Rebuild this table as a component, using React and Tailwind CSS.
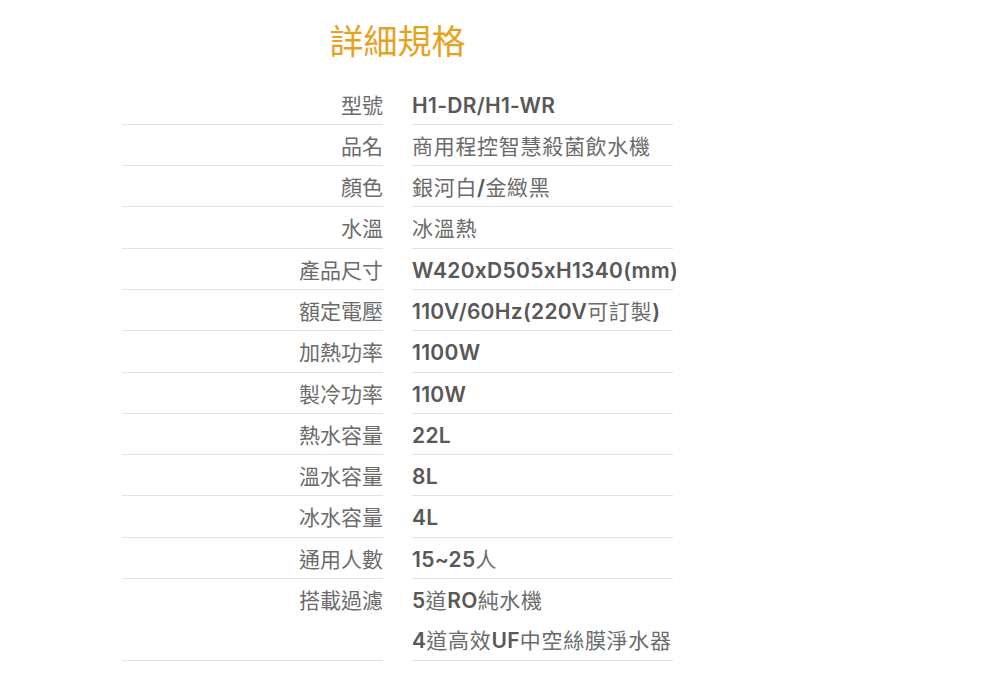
import React from 'react';

const specs = [
    ['型號', ['H1-DR/H1-WR']],
    ['品名', ['商用程控智慧殺菌飲水機']],
    ['顏色', ['銀河白/金緻黑']],
    ['水溫', ['冰溫熱']],
    ['產品尺寸', ['W420xD505xH1340(mm)']],
    ['額定電壓', ['110V/60Hz(220V可訂製)']],
    ['加熱功率', ['1100W']],
    ['製冷功率', ['110W']],
    ['熱水容量', ['22L']],
    ['溫水容量', ['8L']],
    ['冰水容量', ['4L']],
    ['通用人數', ['15~25人']],
    ['搭載過濾', ['5道RO純水機', '4道高效UF中空絲膜淨水器']],
];

// ascii runs are bold latin, the rest stays regular CJK
const Mixed = ({ text }) => {
    const parts = text.split(/([\x00-\x7F]+)/).filter(Boolean);
    return parts.map((p, i) =>
        /^[\x00-\x7F]+$/.test(p) ? (
            <span key={i} className="font-semibold text-[#585858] tracking-[0.3px] font-['Inter','Noto_Sans_CJK_TC',sans-serif]">
                {p}
            </span>
        ) : (
            <span key={i} className="tracking-[0.7px]">{p}</span>
        )
    );
};

const App = () => {
    return (
        <div className="bg-white min-h-[682px] font-['Noto_Sans_CJK_TC',sans-serif]">
            <div className="w-[551px] ml-[122px]">
                <div className="h-[83.5px] flex items-center justify-center">
                    <h1 className="text-[34px] leading-none text-[#e6a11f] -mt-[4px]">詳細規格</h1>
                </div>
                <div className="grid grid-cols-[261px_261px] gap-x-[29px] text-[21px] text-[#6b6b6b]">
                    {specs.map(([label, values]) => (
                        <React.Fragment key={label}>
                            <div className="text-right border-b border-[#e3e3e3]">
                                <div className="h-[40.3px] leading-[40.3px]">{label}</div>
                            </div>
                            <div className="border-b border-[#e3e3e3]">
                                {values.map((v) => (
                                    <div key={v} className="whitespace-nowrap h-[40.3px] leading-[40.3px]">
                                        <Mixed text={v} />
                                    </div>
                                ))}
                            </div>
                        </React.Fragment>
                    ))}
                </div>
            </div>
        </div>
    );
};

export default App;
